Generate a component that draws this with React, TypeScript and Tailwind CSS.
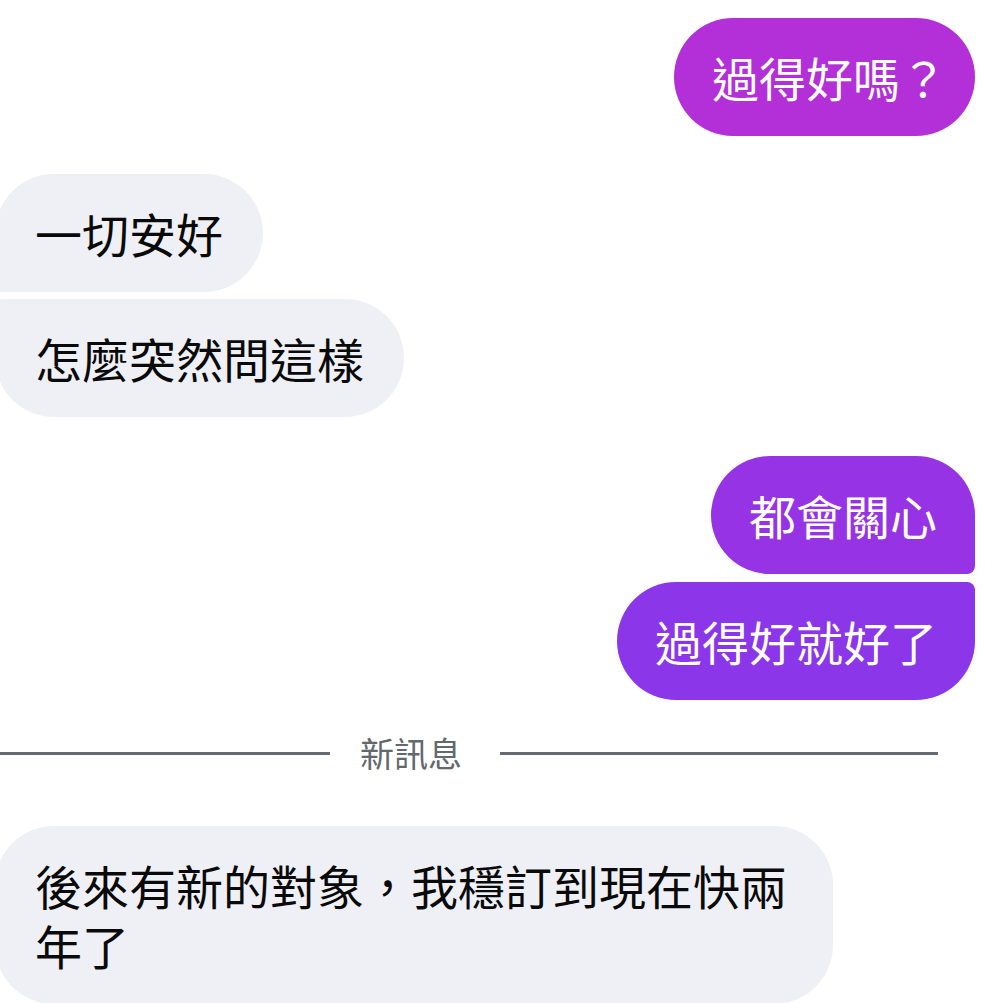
import React from 'react';

type Side = 'in' | 'out';

interface Msg {
  id: number;
  side: Side;
  text: string;
  className: string;
}

const messages: Msg[] = [
  { id: 1, side: 'out', text: '過得好嗎？', className: 'mt-[18px] pr-[28px] bg-[#b32fd7] rounded-[59px]' },
  {
    id: 2,
    side: 'in',
    text: '一切安好',
    className: 'mt-[38px] rounded-tl-[59px] rounded-tr-[59px] rounded-br-[59px] rounded-bl-[8px]',
  },
  {
    id: 3,
    side: 'in',
    text: '怎麼突然問這樣',
    className: 'mt-[7px] rounded-tl-[8px] rounded-tr-[59px] rounded-br-[59px] rounded-bl-[59px]',
  },
  {
    id: 4,
    side: 'out',
    text: '都會關心',
    className:
      'mt-[39px] pr-[38px] bg-[#9633e4] rounded-tl-[59px] rounded-tr-[59px] rounded-br-[8px] rounded-bl-[59px]',
  },
  {
    id: 5,
    side: 'out',
    text: '過得好就好了',
    className:
      'mt-[8px] pr-[38px] bg-[#8b36e9] rounded-tl-[59px] rounded-tr-[8px] rounded-br-[59px] rounded-bl-[59px]',
  },
];

const Bubble = ({ msg }: { msg: Msg }) => {
  const isOut = msg.side === 'out';
  return (
    <div className={`w-full flex ${isOut ? 'justify-end pr-[24px]' : 'justify-start'}`}>
      <div
        className={`w-fit py-[29px] text-[47px] leading-[60px] whitespace-nowrap ${
          isOut ? 'pl-[38px] text-white' : '-ml-[5px] pl-[40px] pr-[40px] bg-[#eff0f5] text-[#0a0a0a]'
        } ${msg.className}`}
      >
        {msg.text}
      </div>
    </div>
  );
};

const App = () => {
  return (
    <div
      className="w-[999px] h-[1003px] overflow-hidden bg-white flex flex-col"
      style={{ fontFamily: '"Noto Sans CJK TC", "Noto Sans CJK SC", sans-serif' }}
    >
      {messages.map(m => (
        <Bubble key={m.id} msg={m} />
      ))}

      {/* new messages divider */}
      <div className="mt-[33px] w-full flex items-center pr-[61px]">
        <div className="w-[330px] h-[3px] bg-[#666a73]" />
        <div className="pl-[30px] pr-[38px] text-[34px] leading-[40px] text-[#63676e]">新訊息</div>
        <div className="flex-1 h-[3px] bg-[#666a73]" />
      </div>

      <div className="w-full flex justify-start mt-[53px]">
        <div className="-ml-[5px] w-[838px] shrink-0 pl-[40px] pr-[38px] py-[29px] bg-[#eff0f5] text-[#0a0a0a] text-[47px] leading-[60px] rounded-[59px]">
          後來有新的對象，我穩訂到現在快兩年了
        </div>
      </div>
    </div>
  );
};

export default App;
